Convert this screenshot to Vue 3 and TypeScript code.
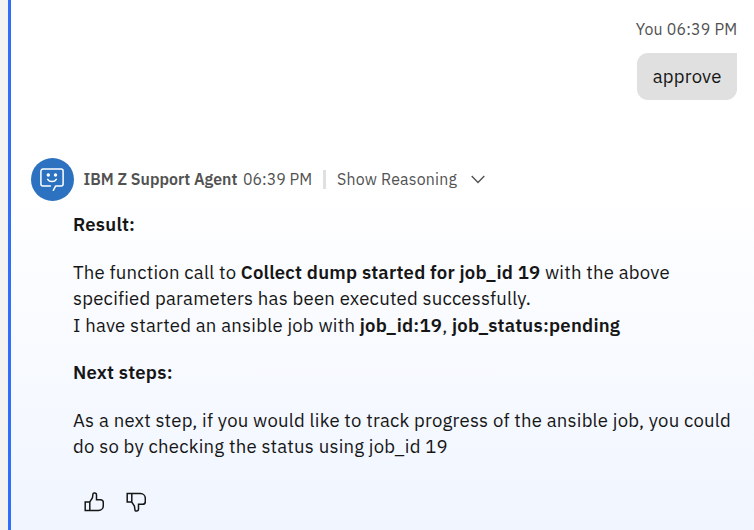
<script setup lang="ts">
const userName = 'You'
const time = '06:39 PM'
</script>

<template>
  <main class="chat">
    <section class="user">
      <div class="user-meta">{{ userName }} {{ time }}</div>
      <div class="bubble">approve</div>
    </section>
    <section class="agent">
      <header class="agent-head">
        <span class="avatar">
          <svg width="24" height="24" viewBox="0 0 24 24" fill="none" stroke="#fff" stroke-width="1.5" stroke-linecap="round" stroke-linejoin="round">
            <path d="M10.4 17.9H2.9a2 2 0 0 1-2-2V3.1a2 2 0 0 1 2-2h18.2a2 2 0 0 1 2 2v12.8a2 2 0 0 1-2 2h-5.4L13.3 22.3" />
            <path d="M7.7 11.3c1.7 3 6.9 3 8.6 0" />
            <circle cx="8.300" cy="7" r="1.700" fill="#fff" stroke="none" />
            <circle cx="15.500" cy="7" r="1.700" fill="#fff" stroke="none" />
          </svg>
        </span>
        <b class="name">IBM Z Support Agent</b>
        <span class="time">{{ time }}</span>
        <span class="divider"></span>
        <button class="reasoning" type="button">
          <span class="reasoning-label">Show Reasoning</span>
          <svg width="14" height="9" viewBox="0 0 14 9" fill="none" stroke="#525252" stroke-width="1.400"><path d="M.7 1 7 7.500 13.300 1" /></svg>
        </button>
      </header>
      <div class="message">
        <p><b>Result:</b></p>
        <p>
          The function call to <b>Collect dump started for job_id 19</b> with the above<br />
          specified parameters has been executed successfully.<br />
          I have started an ansible job with <b>job_id:19</b>, <b>job_status:pending</b>
        </p>
        <p><b>Next steps:</b></p>
        <p>
          As a next step, if you would like to track progress of the ansible job, you could<br />
          do so by checking the status using job_id 19
        </p>
      </div>
      <footer class="feedback">
        <button type="button" aria-label="Helpful">
          <svg class="thumb" viewBox="0 0 20 20" fill="none" stroke="#161616" stroke-width="1.500">
            <path d="M1.200 9.900h4.600v8.600H1.200zM5.800 9.900 8.400 6l.6-4.100c.1-.6.500-.9 1-.9h.5a2 2 0 0 1 2 2v4.700h4.100a2.700 2.700 0 0 1 2.700 2.700v3.300a4.800 4.800 0 0 1-4.800 4.800H5.800" />
          </svg>
        </button>
        <button type="button" aria-label="Not helpful">
          <svg class="thumb" viewBox="0 0 20 20" fill="none" stroke="#161616" stroke-width="1.500">
            <path d="M1.200 10.100h4.600V1.500H1.200zM5.800 10.100 8.400 14l.6 4.100c.1.6.500.9 1 .9h.5a2 2 0 0 0 2-2v-4.700h4.100a2.700 2.700 0 0 0 2.700-2.700V6.300a4.800 4.800 0 0 0-4.800-4.800H5.800" />
          </svg>
        </button>
      </footer>
    </section>
  </main>
</template>

<style>
body { margin: 0; background: #f3f3f3; overflow: hidden; }
</style>

<style scoped>
.chat {
  box-sizing: border-box;
  height: 530px;
  margin-left: 8px;
  padding: 19px 16.800px 0 19.600px;
  border-left: 3px solid #2f6dfb;
  background: linear-gradient(180deg, #fff 0, #fff 180px, #f0f5ff 530px);
  font-family: "IBM Plex Sans", Roboto, "Liberation Sans", sans-serif;
  color: #161616;
}
.user { display: flex; flex-direction: column; align-items: flex-end; }
.user-meta { height: 21px; line-height: 20px; font-size: 15.900px; color: #525252; letter-spacing: .2px; margin-right: -.2px; }
.bubble {
  box-sizing: border-box;
  width: 100px;
  height: 47px;
  margin-top: 13px;
  border-radius: 11px 0 11px 11px;
  background: #e0e0e0;
  text-align: center;
  line-height: 47px;
  font-size: 18.550px;
  letter-spacing: .21px;
}
.agent-head { display: flex; align-items: center; height: 43px; margin-top: 58px; font-size: 15.900px; line-height: 20px; color: #525252; white-space: nowrap; }
.avatar { display: flex; align-items: center; justify-content: center; width: 43px; height: 43px; margin-right: 10px; border-radius: 50%; background: #2c72c0; flex: none; }
.name { width: 159.400px; }
.time { width: 80px; }
.name, .time, .reasoning { margin-top: -1px; }
.divider { width: 3px; height: 19px; background: #e0e0e0; margin-right: 11px; }
button { padding: 0; border: 0; background: none; color: inherit; font: inherit; display: flex; }
.reasoning { align-items: center; }
.reasoning-label { width: 134px; text-align: left; letter-spacing: .2px; }
.message { margin-left: 42.400px; padding-top: 10px; font-size: 18.550px; line-height: 26.500px; letter-spacing: .22px; white-space: nowrap; }
p { margin: 0 0 21px; }
b { font-weight: 600; }
.feedback { display: flex; gap: 22px; margin: 32.600px 0 0 53.400px; }
.thumb { display: block; width: 20px; height: 20px; }
</style>
